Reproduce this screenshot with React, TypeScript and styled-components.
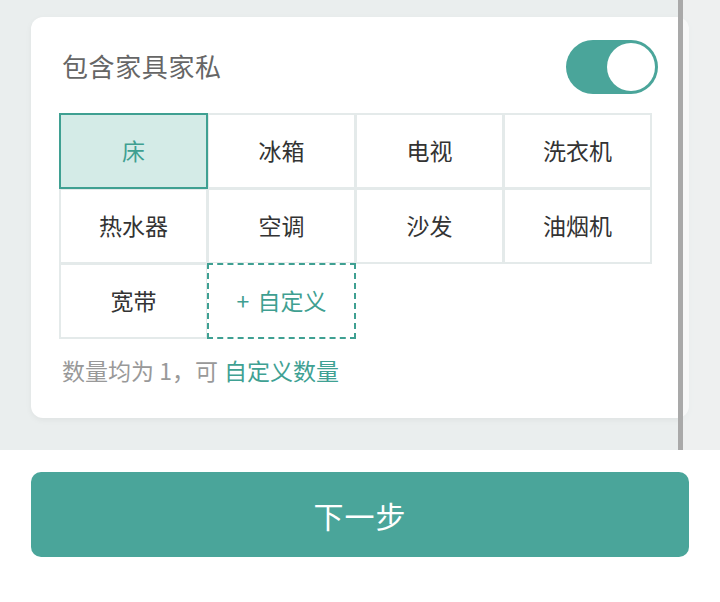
import React, { useState } from "react";
import styled, { createGlobalStyle } from "styled-components";

const GlobalStyle = createGlobalStyle`
  html, body {
    margin: 0;
    padding: 0;
    background: #ffffff;
    font-family: "Noto Sans CJK SC", "Noto Sans", sans-serif;
  }
  * { box-sizing: border-box; }
`;

const TEAL = "#4aa59a";

const Page = styled.div`
  width: 720px;
  height: 602px;
  display: flex;
  flex-direction: column;
  background: #ffffff;
  overflow: hidden;
`;

const TopArea = styled.div`
  position: relative;
  height: 450px;
  background: #eaeeee;
  padding: 17px 31px 0 31px;
`;

const Card = styled.div`
  width: 658px;
  height: 401px;
  background: #ffffff;
  border-radius: 12px;
  box-shadow: 0 2px 6px rgba(0, 0, 0, 0.05);
  padding: 23px 37px 0 29px;
  display: flex;
  flex-direction: column;
`;

const Header = styled.div`
  display: flex;
  align-items: center;
  justify-content: space-between;
  height: 54px;
  padding-left: 2px;
`;

const Title = styled.div`
  font-size: 26px;
  line-height: 30px;
  margin-top: -2px;
  color: #666666;
  letter-spacing: 0.6px;
`;

const Toggle = styled.button<{ $on: boolean }>`
  position: relative;
  width: 92px;
  height: 54px;
  border-radius: 27px;
  border: none;
  padding: 0;
  margin-right: -6px;
  background: ${(p) => (p.$on ? TEAL : "#d5dcdc")};
  cursor: pointer;
`;

const Knob = styled.span<{ $on: boolean }>`
  position: absolute;
  top: 3px;
  left: ${(p) => (p.$on ? "41px" : "3px")};
  width: 48px;
  height: 48px;
  border-radius: 50%;
  background: #ffffff;
`;

const Grid = styled.div`
  margin-top: 20px;
  display: grid;
  grid-template-columns: repeat(4, 148px);
  grid-auto-rows: 75px;
`;

const Cell = styled.div<{ $variant?: "normal" | "selected" | "custom" }>`
  position: relative;
  display: flex;
  align-items: center;
  justify-content: center;
  gap: 8px;
  font-size: 23px;
  line-height: 30px;
  padding-bottom: 3px;
  margin: -1px 0 0 -1px;
  border: ${(p) =>
    p.$variant === "selected"
      ? `2px solid #3fa092`
      : p.$variant === "custom"
      ? `2px dashed #3fa092`
      : `2px solid #e4eaea`};
  background: ${(p) => (p.$variant === "selected" ? "#d4ebe7" : "#ffffff")};
  color: ${(p) => (p.$variant === "normal" || !p.$variant ? "#333333" : "#3f9f91")};
  z-index: ${(p) => (p.$variant === "normal" || !p.$variant ? 0 : 1)};
`;

const Note = styled.div`
  margin-top: 15px;
  font-size: 23px;
  line-height: 32px;
  color: #999999;
  padding-left: 2px;
`;

const NoteLink = styled.span`
  color: #3fa193;
  margin-left: 6px;
`;

const Scrollbar = styled.div`
  position: absolute;
  top: 0;
  left: 678px;
  width: 5px;
  height: 450px;
  background: #a9a9a9;
`;

const ScrollShade = styled.div`
  position: absolute;
  top: 0;
  left: 683px;
  right: 0;
  height: 450px;
  background: rgba(240, 243, 243, 0.55);
`;

const NextButton = styled.button`
  margin: 22px 31px 0 31px;
  height: 85px;
  border: none;
  border-radius: 10px;
  background: ${TEAL};
  color: #ffffff;
  font-family: "Noto Sans CJK SC", "Noto Sans", sans-serif;
  font-size: 30px;
  letter-spacing: 1px;
  cursor: pointer;
`;

const items = ["床", "冰箱", "电视", "洗衣机", "热水器", "空调", "沙发", "油烟机", "宽带"];

export default function App() {
  const [on, setOn] = useState(true);
  const [selected, setSelected] = useState("床");
  return (
    <>
      <GlobalStyle />
      <Page>
        <TopArea>
          <Card>
            <Header>
              <Title>包含家具家私</Title>
              <Toggle $on={on} onClick={() => setOn(!on)} aria-label="toggle">
                <Knob $on={on} />
              </Toggle>
            </Header>
            <Grid>
              {items.map((it) => (
                <Cell
                  key={it}
                  $variant={it === selected ? "selected" : "normal"}
                  onClick={() => setSelected(it)}
                >
                  {it}
                </Cell>
              ))}
              <Cell $variant="custom">
                <span>+</span>
                <span>自定义</span>
              </Cell>
            </Grid>
            <Note>
              数量均为 1，可<NoteLink>自定义数量</NoteLink>
            </Note>
          </Card>
          <ScrollShade />
          <Scrollbar />
        </TopArea>
        <NextButton>下一步</NextButton>
      </Page>
    </>
  );
}
